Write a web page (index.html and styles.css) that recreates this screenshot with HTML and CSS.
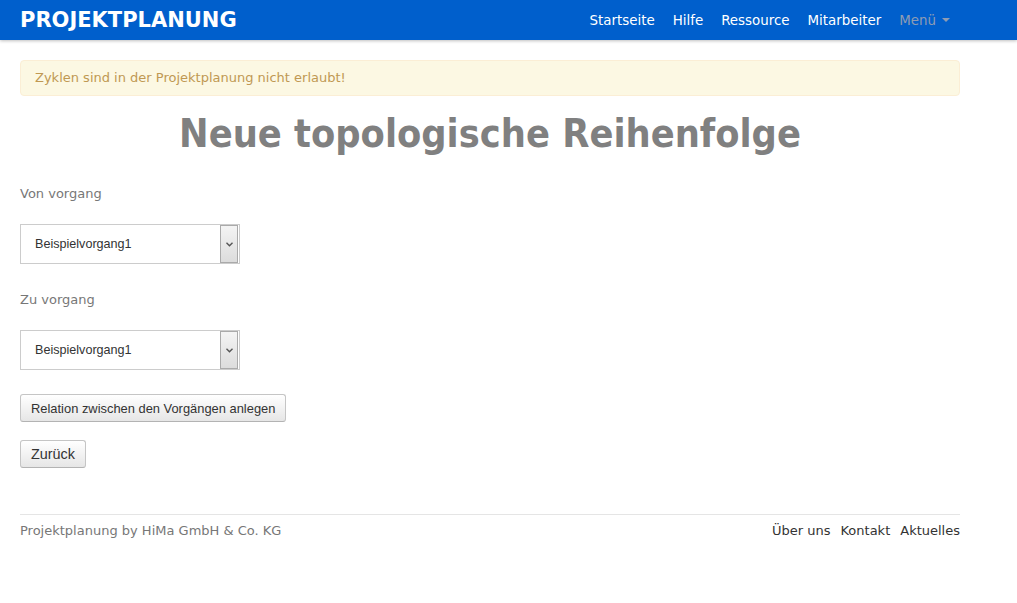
FILE: index.html
```html
<!DOCTYPE html>
<html lang="de">
<head>
<meta charset="utf-8">
<title>Projektplanung</title>
<link rel="stylesheet" href="styles.css">
</head>
<body>
<header class="navbar">
  <div class="container nav-inner">
    <a class="brand" href="#">PROJEKTPLANUNG</a>
    <nav class="nav">
      <a href="#">Startseite</a>
      <a href="#">Hilfe</a>
      <a href="#">Ressource</a>
      <a href="#">Mitarbeiter</a>
      <span class="dropdown">Menü <span class="caret"></span></span>
    </nav>
  </div>
</header>
<main class="container">
  <div class="alert">Zyklen sind in der Projektplanung nicht erlaubt!</div>
  <h1 class="title">Neue topologische Reihenfolge</h1>
  <form class="form">
    <label class="label label-first">Von vorgang</label>
    <div class="select">
      <span class="select-text">Beispielvorgang1</span>
      <span class="select-btn"><svg width="7" height="5" viewBox="0 0 7 5"><path d="M0.5 0.8 L3.5 3.8 L6.5 0.8" fill="none" stroke="#555" stroke-width="1.4"/></svg></span>
    </div>
    <label class="label">Zu vorgang</label>
    <div class="select">
      <span class="select-text">Beispielvorgang1</span>
      <span class="select-btn"><svg width="7" height="5" viewBox="0 0 7 5"><path d="M0.5 0.8 L3.5 3.8 L6.5 0.8" fill="none" stroke="#555" stroke-width="1.4"/></svg></span>
    </div>
    <div class="actions">
      <button type="button" class="btn">Relation zwischen den Vorgängen anlegen</button>
      <button type="button" class="btn btn-back">Zurück</button>
    </div>
  </form>
  <footer class="footer">
    <span class="copy">Projektplanung by HiMa GmbH &amp; Co. KG</span>
    <span class="links"><a href="#">Über uns</a><a href="#">Kontakt</a><a href="#">Aktuelles</a></span>
  </footer>
</main>
</body>
</html>
```
FILE: styles.css
```css
html, body { margin: 0; padding: 0; }
body {
  font-family: "DejaVu Sans", Verdana, sans-serif;
  font-size: 13px;
  color: #333;
  background: #fff;
}
a { text-decoration: none; color: inherit; }
.container { width: 940px; margin-left: 20px; }
.navbar {
  background: #005fcc;
  height: 40px;
  box-shadow: 0 1px 3px rgba(0,0,0,0.25);
}
.nav-inner {
  display: flex;
  align-items: center;
  height: 40px;
  justify-content: space-between;
}
.brand {
  color: #fff;
  font-weight: bold;
  font-size: 21px;
}
.nav { display: flex; align-items: center; gap: 18px; font-size: 13.4px; }
.nav a { color: #fff; }
.nav .dropdown { color: #8e9cb3; display: flex; align-items: center; gap: 6px; padding-right: 10px; }
.caret {
  width: 0; height: 0;
  border-left: 4px solid transparent;
  border-right: 4px solid transparent;
  border-top: 4px solid #8e9cb3;
}
.alert {
  margin-top: 20px;
  background: #fcf8e3;
  border: 1px solid #fbeed5;
  border-radius: 4px;
  color: #c09853;
  padding: 9px 14px;
  font-size: 13px;
  line-height: 16px;
}
.title {
  text-align: center;
  color: #808080;
  font-family: "DejaVu Sans Condensed", "DejaVu Sans", sans-serif;
  font-stretch: condensed;
  font-size: 39.3px;
  font-weight: bold;
  margin: 16px 0 0;
  line-height: 44px;
}
.form { display: flex; flex-direction: column; align-items: flex-start; }
.label { color: #777; margin-top: 27px; line-height: 18px; }
.label-first { margin-top: 29px; }
.select {
  margin-top: 21px;
  width: 218px;
  height: 38px;
  border: 1px solid #ccc;
  display: flex;
  align-items: center;
  justify-content: space-between;
  font-family: "Liberation Sans", Arial, sans-serif;
  font-size: 12.6px;
  color: #333;
}
.select-text { padding-left: 14px; }
.select-btn {
  width: 16px;
  height: 36px;
  margin-right: 1px;
  border: 1px solid #aaa;
  background: linear-gradient(#f4f4f4, #dcdcdc);
  display: flex;
  align-items: center;
  justify-content: center;
}
.actions { display: flex; flex-direction: column; align-items: flex-start; gap: 18px; margin-top: 24px; }
.btn {
  font-family: "Liberation Sans", Arial, sans-serif;
  font-size: 12.9px;
  color: #333;
  height: 28px;
  padding: 0 10px;
  border: 1px solid #c5c5c5;
  border-bottom-color: #b3b3b3;
  border-radius: 3px;
  background: linear-gradient(#fff, #e6e6e6);
}
.btn-back { font-size: 14.4px; padding: 0 10px; }
.footer {
  margin-top: 46px;
  border-top: 1px solid #e5e5e5;
  padding-top: 7px;
  display: flex;
  justify-content: space-between;
  line-height: 18px;
}
.copy { color: #777; }
.links a { color: #333; margin-left: 10px; }
```
